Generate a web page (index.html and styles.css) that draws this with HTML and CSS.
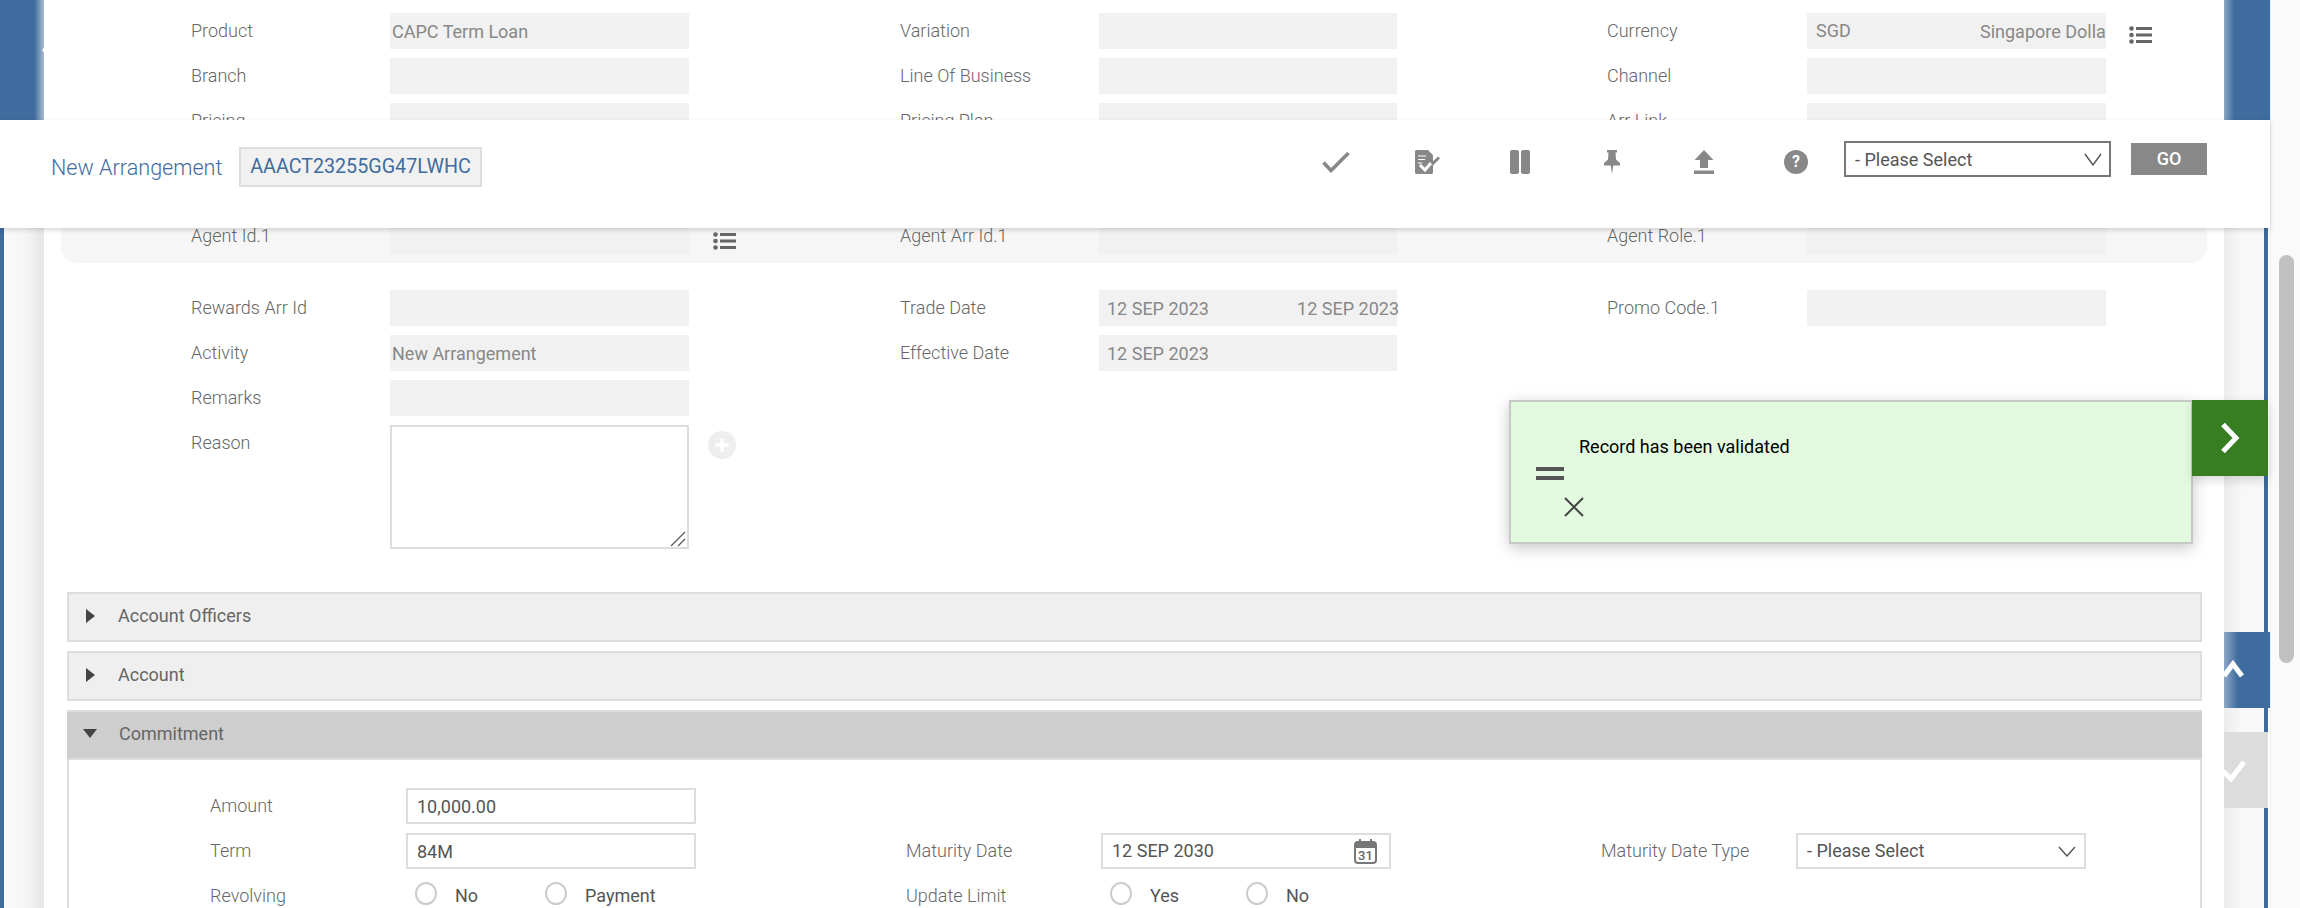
FILE: index.html
```html
<!DOCTYPE html>
<html lang="en">
<head>
    <meta charset="UTF-8">
    <title>New Arrangement</title>
    <link rel="stylesheet" href="styles.css">
</head>
<body>
    <div class="page">
        <div class="rail rail-left">
            <div class="rail-top">
                <svg class="rail-glyph" width="8" height="16" viewBox="0 0 8 16"><path d="M8 1 L3 8 L8 15" fill="none" stroke="#fff" stroke-width="3"/></svg>
            </div>
            <div class="rail-bottom"></div>
        </div>

        <main class="panel">
            <!-- top of the form, partly hidden under the header -->
            <section class="form-rows">
                <div class="form-row">
                    <div class="label">Product</div>
                    <div class="field tight">CAPC Term Loan</div>
                    <div class="label">Variation</div>
                    <div class="field"></div>
                    <div class="label">Currency</div>
                    <div class="field-wrap">
                        <div class="field currency"><span class="code">SGD</span><span>Singapore Dollar</span></div>
                        <svg class="lookup lookup-top" width="23" height="18" viewBox="0 0 23 18"><use href="#list-icon"/></svg>
                    </div>
                </div>
                <div class="form-row">
                    <div class="label">Branch</div>
                    <div class="field"></div>
                    <div class="label">Line Of Business</div>
                    <div class="field"></div>
                    <div class="label">Channel</div>
                    <div class="field"></div>
                </div>
                <div class="form-row">
                    <div class="label">Pricing</div>
                    <div class="field"></div>
                    <div class="label">Pricing Plan</div>
                    <div class="field"></div>
                    <div class="label">Arr Link</div>
                    <div class="field"></div>
                </div>
            </section>

            <section class="agent-group form-rows">
                <div class="form-row">
                    <div class="label">Agent Id.1</div>
                    <div class="field-wrap">
                        <div class="field"></div>
                        <svg class="lookup lookup-agent" width="23" height="18" viewBox="0 0 23 18"><use href="#list-icon"/></svg>
                    </div>
                    <div class="label">Agent Arr Id.1</div>
                    <div class="field"></div>
                    <div class="label">Agent Role.1</div>
                    <div class="field"></div>
                </div>
            </section>

            <section class="form-rows rewards">
                <div class="form-row">
                    <div class="label">Rewards Arr Id</div>
                    <div class="field"></div>
                    <div class="label">Trade Date</div>
                    <div class="field dates"><span>12 SEP 2023</span><span class="date-end">12 SEP 2023</span></div>
                    <div class="label">Promo Code.1</div>
                    <div class="field"></div>
                </div>
                <div class="form-row">
                    <div class="label">Activity</div>
                    <div class="field tight">New Arrangement</div>
                    <div class="label">Effective Date</div>
                    <div class="field dates"><span>12 SEP 2023</span></div>
                </div>
                <div class="form-row">
                    <div class="label">Remarks</div>
                    <div class="field"></div>
                </div>
                <div class="form-row">
                    <div class="label">Reason</div>
                    <div class="field-wrap">
                        <textarea class="reason"></textarea>
                        <svg class="grip" width="16" height="16" viewBox="0 0 16 16"><path d="M15 1L1 15M15 8l-7 7" fill="none" stroke="#555" stroke-width="1.200"/></svg>
                        <svg class="add-more" width="28" height="28" viewBox="0 0 28 28">
                            <circle cx="14" cy="14" r="14" fill="#eee"/>
                            <path d="M14 7.500v13M7.500 14h13" stroke="#fff" stroke-width="3.500"/>
                        </svg>
                    </div>
                </div>
            </section>

            <section class="accordion">
                <div class="acc-bar">
                    <span class="arrow-right"></span>
                    <span>Account Officers</span>
                </div>
                <div class="acc-bar">
                    <span class="arrow-right"></span>
                    <span>Account</span>
                </div>
                <div class="acc-bar open">
                    <span class="arrow-down"></span>
                    <span>Commitment</span>
                </div>
                <div class="acc-body">
                    <div class="acc-row">
                        <div class="label">Amount</div>
                        <input class="entry" type="text" value="10,000.00">
                    </div>
                    <div class="acc-row">
                        <div class="label">Term</div>
                        <input class="entry" type="text" value="84M">
                        <div class="label">Maturity Date</div>
                        <div class="entry entry-flex">
                            <span>12 SEP 2030</span>
                            <svg class="calendar" width="23" height="25" viewBox="0 0 23 25">
                                <rect x="1" y="3" width="21" height="21" rx="3" fill="#fff" stroke="#777" stroke-width="2"/>
                                <path d="M1 4h21v5H1z" fill="#777"/>
                                <path d="M6 0v5M17 0v5" stroke="#777" stroke-width="2"/>
                                <text x="11.500" y="21" class="cal-day">31</text>
                            </svg>
                        </div>
                        <div class="label">Maturity Date Type</div>
                        <div class="entry entry-flex">
                            <span>- Please Select</span>
                            <svg class="caret" width="18" height="11" viewBox="0 0 18 11"><path d="M1 1l8 9 8-9" fill="none" stroke="#555" stroke-width="1.400"/></svg>
                        </div>
                    </div>
                    <div class="acc-row">
                        <div class="label">Revolving</div>
                        <div class="radios">
                            <span class="radio"></span><span class="radio-text first">No</span>
                            <span class="radio"></span><span class="radio-text">Payment</span>
                        </div>
                        <div class="label">Update Limit</div>
                        <div class="radios">
                            <span class="radio"></span><span class="radio-text first wide">Yes</span>
                            <span class="radio"></span><span class="radio-text">No</span>
                        </div>
                    </div>
                </div>
            </section>
        </main>

        <div class="rail rail-right">
            <div class="rail-top"></div>
            <div class="rail-bottom">
                <div class="side-btn side-up">
                    <svg width="24" height="18" viewBox="0 0 24 18"><path d="M3 16L12 4l9 12" transform="translate(-3 0)" fill="none" stroke="#fff" stroke-width="5"/></svg>
                </div>
                <div class="side-btn side-ok">
                    <svg width="24" height="22" viewBox="0 0 24 22"><path d="M1 11l8 8L22 2" transform="translate(-2 0)" fill="none" stroke="#fff" stroke-width="5"/></svg>
                </div>
            </div>
        </div>

        <div class="scrollbar"><div class="thumb"></div></div>
    </div>

    <header class="top-bar">
        <div class="title">New Arrangement</div>
        <div class="ref-box">AAACT23255GG47LWHC</div>
        <div class="actions">
            <span class="action">
                <svg width="28" height="22" viewBox="0 0 28 22"><path d="M1.500 11.500L9 19.500 26.500 2" fill="none" stroke="#888" stroke-width="3.600"/></svg>
            </span>
            <span class="action">
                <svg width="26" height="24" viewBox="0 0 26 24">
                    <path d="M0 1.500A1.500 1.500 0 0 1 1.500 0H13l5 5v17.500a1.500 1.500 0 0 1-1.500 1.500h-15A1.500 1.500 0 0 1 0 22.500z" fill="#888"/>
                    <path d="M3 6h8M3 9.500h7M3 13h4" stroke="#fff" stroke-width="1.200"/>
                    <path d="M5 15l5 5 6-7" fill="none" stroke="#fff" stroke-width="3"/>
                    <path d="M16 13l7-6.500 2 2-7 7z" fill="#888"/>
                </svg>
            </span>
            <span class="action">
                <svg width="20" height="24" viewBox="0 0 20 24">
                    <rect width="9" height="24" rx="2" fill="#888"/>
                    <rect x="11" width="9" height="24" rx="2" fill="#888"/>
                </svg>
            </span>
            <span class="action">
                <svg width="16" height="24" viewBox="0 0 16 24"><path d="M3 0h10v2.500h-1.500l.5 7 4 3.500v2.500H9.300L8 24l-1.300-8.500H0V13l4-3.500.5-7H3z" fill="#888"/></svg>
            </span>
            <span class="action">
                <svg width="20" height="24" viewBox="0 0 20 24"><path d="M10 0l9.500 10H14v8H6v-8H.5zM0 20.500h20V24H0z" fill="#888"/></svg>
            </span>
            <span class="action">
                <span class="help">?</span>
            </span>
        </div>
        <div class="bar-select">
            <span>- Please Select</span>
            <svg class="caret" width="18" height="13" viewBox="0 0 18 13"><path d="M1 1l8 11 8-11" fill="none" stroke="#555" stroke-width="1.400"/></svg>
        </div>
        <div class="go-btn">GO</div>
    </header>

    <aside class="toast">
        <div class="toast-text">Record has been validated</div>
        <div class="toast-handle"></div>
        <svg class="toast-close" width="20" height="20" viewBox="0 0 20 20"><path d="M1 1l18 18M19 1L1 19" stroke="#444" stroke-width="2"/></svg>
    </aside>
    <div class="toast-tab">
        <svg width="20" height="32" viewBox="0 0 20 32"><path d="M3 2.500L16 16 3 29.500" fill="none" stroke="#fff" stroke-width="5"/></svg>
    </div>

    <svg class="icon-defs" width="0" height="0">
        <symbol id="list-icon" viewBox="0 0 23 18">
            <circle cx="2.500" cy="2.500" r="2.300" fill="#666"/>
            <circle cx="2.500" cy="9" r="2.300" fill="#666"/>
            <circle cx="2.500" cy="15.500" r="2.300" fill="#666"/>
            <path d="M7 1h16v3H7zM7 7.500h16v3H7zM7 14h16v3H7z" fill="#666"/>
        </symbol>
    </svg>
</body>
</html>
```

FILE: styles.css
```css
* {
    box-sizing: border-box;
}
html, body {
    margin: 0;
    height: 908px;
    overflow: hidden;
}
body {
    position: relative;
    font-family: Roboto, "Liberation Sans", sans-serif;
    font-size: 18px;
    color: #666;
    background: #fff;
}
.page {
    display: flex;
    width: 2300px;
    height: 908px;
}

/* side rails */
.rail {
    display: flex;
    flex-direction: column;
    flex: none;
}
.rail-left {
    width: 44px;
}
.rail-right {
    width: 46px;
}
.rail-top {
    flex: none;
    height: 228px;
    overflow: hidden;
}
.rail-left .rail-top {
    background: linear-gradient(to right, #3f6c9e 78%, #a9bdd3 100%);
    display: flex;
    justify-content: flex-end;
    padding-top: 42px;
}
.rail-right .rail-top {
    background: linear-gradient(to right, #8ea8c6 0, #3f6c9e 22%);
}
.rail-glyph {
    flex: none;
    margin-right: -5px;
}
.rail-bottom {
    flex: 1;
}
.rail-left .rail-bottom {
    border-left: 4px solid #3f6c9e;
    background: linear-gradient(to right, #fafafa 0, #f5f5f5 55%, #e6e6e6 100%);
}
.rail-right .rail-bottom {
    border-right: 2px solid #fff;
    padding-top: 404px;
    background: linear-gradient(to right, #ececec 0, #f8f8f8 45%) left top / 40px 100% no-repeat,
                linear-gradient(#3f6c9e, #3f6c9e) 40px 0 / 4px 100% no-repeat;
}
.side-btn {
    height: 76px;
    overflow: hidden;
    display: flex;
    align-items: center;
}
.side-up {
    background: linear-gradient(to right, #8ea8c6 0, #3f6c9e 30%);
    margin-right: -2px;
    padding-bottom: 2px;
}
.side-ok {
    margin-top: 24px;
    background: #dcdcdc;
    padding-top: 2px;
}
.scrollbar {
    flex: none;
    width: 30px;
    padding: 255px 6px 0 8px;
    background: #fafafa;
    border-left: 1px solid #eee;
}
.thumb {
    height: 408px;
    border-radius: 8px;
    background: #c1c1c1;
}

/* form */
.panel {
    flex: none;
    width: 2180px;
    height: 908px;
    padding-top: 13px;
    overflow: hidden;
    background: #fff;
}
.form-rows {
    display: flex;
    flex-direction: column;
    gap: 9px;
}
.form-row {
    display: grid;
    grid-template-columns: 199px 299px 211px 199px 298px 210px 200px 299px;
    padding-left: 147px;
}
.form-row .label:nth-child(3),
.acc-row .label:nth-child(3) {
    grid-column: 4;
}
.form-row .label:nth-child(5),
.acc-row .label:nth-child(5) {
    grid-column: 7;
}
.label {
    height: 36px;
    line-height: 36px;
    font-weight: 300;
    color: #666;
    white-space: nowrap;
}
.field {
    height: 36px;
    line-height: 37px;
    background: #f1f1f1;
    color: #888;
    white-space: nowrap;
}
.field.tight {
    padding-left: 2px;
}
.field.currency {
    display: flex;
    padding-left: 9px;
    overflow: hidden;
}
.code {
    flex: none;
    width: 164px;
    line-height: 35px;
}
.field.dates {
    display: flex;
    padding-left: 8px;
}
.date-end {
    margin-left: auto;
    margin-right: -2px;
}
.field-wrap {
    position: relative;
}
.lookup {
    position: absolute;
    left: 100%;
}
.lookup-top {
    margin-left: 23px;
    top: 13px;
}
.lookup-agent {
    margin-left: 24px;
    top: 14px;
}
.add-more {
    position: absolute;
    left: 100%;
    margin-left: 19px;
    top: 6px;
}
.grip {
    position: absolute;
    right: 3px;
    bottom: 2px;
}
.agent-group {
    margin: 61px 0 0 17px;
    width: 2146px;
    padding-top: 18px;
    padding-bottom: 9px;
    border-radius: 0 0 16px 16px;
    background: #f6f6f6;
}
.agent-group .form-row {
    padding-left: 130px;
}
.rewards {
    margin-top: 27px;
}
.reason {
    display: block;
    width: 299px;
    height: 124px;
    border: 2px solid #ddd;
    background: #fff;
    margin: 0;
    resize: none;
}

/* accordion */
.accordion {
    display: flex;
    flex-direction: column;
    gap: 9px;
    margin: 43px 0 0 23px;
    width: 2135px;
}
.acc-bar {
    display: flex;
    align-items: center;
    height: 50px;
    padding: 0 0 3px 17px;
    border: 2px solid #ddd;
    background: #efefef;
    color: #666;
}
.acc-bar.open {
    background: #cecece;
    border-width: 2px 0 2px 0;
}
.arrow-right {
    width: 0;
    height: 0;
    margin-right: 23px;
    border-left: 9px solid #444;
    border-top: 7px solid transparent;
    border-bottom: 7px solid transparent;
}
.arrow-down {
    width: 0;
    height: 0;
    margin: 0 22px 0 -1px;
    border-top: 9px solid #444;
    border-left: 7px solid transparent;
    border-right: 7px solid transparent;
}
.acc-body {
    margin-top: -9px;
    height: 148px;
    padding: 28px 0 0 141px;
    border-left: 2px solid #ddd;
    border-right: 2px solid #ddd;
    display: flex;
    flex-direction: column;
    gap: 9px;
}
.acc-row {
    display: grid;
    grid-template-columns: 196px 290px 210px 195px 290px 210px 195px 290px;
}
.entry {
    height: 36px;
    margin: 0;
    padding: 0 9px;
    border: 2px solid #ddd;
    background: #fff;
    color: #555;
    font: inherit;
    line-height: 32px;
}
.entry-flex {
    display: flex;
    align-items: center;
    justify-content: space-between;
    white-space: nowrap;
}
.entry-flex svg {
    flex: none;
}
.entry .caret {
    margin-right: -1px;
}
.entry .calendar {
    margin-right: 3px;
}
.cal-day {
    font-size: 13px;
    font-weight: 500;
    fill: #666;
    text-anchor: middle;
}
.radios {
    display: flex;
    align-items: center;
    height: 36px;
    padding-left: 9px;
    color: #555;
}
.radio {
    flex: none;
    width: 22px;
    height: 23px;
    margin-top: -6px;
    border: 2px solid #ccc;
    border-radius: 50%;
    background: #fff;
}
.radio-text {
    margin-left: 18px;
    line-height: 36px;
}
.radio-text.first {
    width: 90px;
}
.radio-text.wide {
    width: 96px;
}

/* fixed header over the form */
.top-bar {
    position: absolute;
    left: 0;
    top: 120px;
    display: flex;
    align-items: flex-start;
    width: 2270px;
    height: 108px;
    padding-left: 51px;
    background: #fff;
    box-shadow: 0 2px 5px rgba(0, 0, 0, 0.16);
}
.title {
    margin-top: 28px;
    width: 188px;
    line-height: 40px;
    font-size: 21.600px;
    font-weight: 300;
    color: #3f6c9e;
    white-space: nowrap;
}
.ref-box {
    margin-top: 27px;
    width: 243px;
    height: 40px;
    line-height: 36px;
    text-align: center;
    font-size: 19.700px;
    color: #3f6c9e;
    border: 2px solid #ddd;
    background: #f1f1f1;
    white-space: nowrap;
}
.actions {
    display: flex;
    margin: 30px 0 0 808px;
}
.action {
    display: flex;
    justify-content: center;
    width: 92px;
    height: 24px;
    align-items: center;
}
.help {
    width: 24px;
    height: 24px;
    line-height: 24px;
    border-radius: 50%;
    text-align: center;
    background: #888;
    color: #fff;
    font-size: 16px;
    font-weight: 700;
}
.bar-select {
    display: flex;
    align-items: center;
    justify-content: space-between;
    width: 267px;
    height: 36px;
    margin: 21px 0 0 2px;
    padding: 0 7px 0 9px;
    border: 2px solid #777;
    color: #555;
    white-space: nowrap;
}
.go-btn {
    width: 76px;
    height: 32px;
    line-height: 32px;
    margin: 23px 0 0 20px;
    text-align: center;
    background: #888;
    color: #fff;
    font-weight: 500;
}

/* validation message */
.toast {
    position: absolute;
    left: 1509px;
    top: 400px;
    width: 684px;
    height: 144px;
    padding-top: 34px;
    border: 2px solid #c8c8c8;
    background: #e4fae0;
    box-shadow: 0 4px 14px rgba(0, 0, 0, 0.22);
}
.toast-text {
    margin-left: 68px;
    line-height: 22px;
    color: #000;
}
.toast-handle {
    width: 28px;
    height: 13px;
    margin: 9px 0 0 25px;
    border-top: 4px solid #555;
    border-bottom: 4px solid #555;
}
.toast-close {
    display: block;
    margin: 17px 0 0 53px;
}
.toast-tab {
    position: absolute;
    left: 2192px;
    top: 400px;
    display: flex;
    align-items: center;
    justify-content: center;
    width: 76px;
    height: 76px;
    background: #377d22;
    box-shadow: 0 4px 10px rgba(0, 0, 0, 0.15);
}
.icon-defs {
    position: absolute;
}
```
